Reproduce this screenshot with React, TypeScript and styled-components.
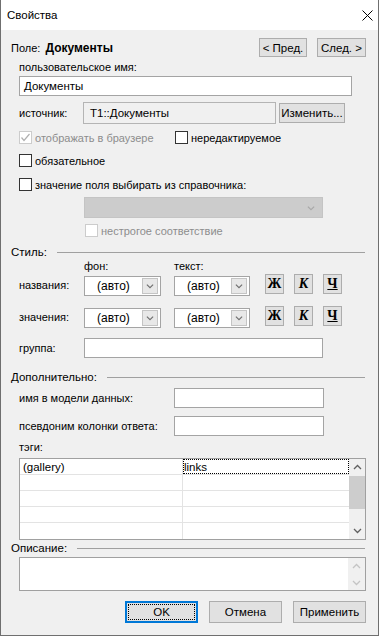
import { FC, ReactNode } from 'react';
import styled, { createGlobalStyle, css } from 'styled-components';

const GlobalStyle = createGlobalStyle`
  html, body {
    margin: 0;
    padding: 0;
    background: #f0f0f0;
  }
  body {
    font-family: "Liberation Sans", Arial, sans-serif;
    font-size: 11px;
    color: #000;
  }
  * {
    box-sizing: border-box;
  }
`;

const Chevron: FC<{ up?: boolean; color?: string; size?: number }> = ({ up, color = '#606060', size = 9 }) => (
  <svg width={size} height={size} viewBox="0 0 9 9">
    <polyline
      points={up ? '1,6 4.5,2.5 8,6' : '1,3 4.5,6.5 8,3'}
      fill="none"
      stroke={color}
      strokeWidth="1.3"
    />
  </svg>
);

const CheckMark: FC<{ color: string }> = ({ color }) => (
  <svg width="11" height="11" viewBox="0 0 11 11">
    <polyline points="1.5,5.5 4,8.5 9.5,2" fill="none" stroke={color} strokeWidth="1.2" />
  </svg>
);

const Checkbox: FC<{ checked?: boolean; disabled?: boolean; children: ReactNode }> = ({
  checked,
  disabled,
  children,
}) => (
  <CheckLabel disabled={disabled}>
    <CheckBoxSquare disabled={disabled}>
      {checked && <CheckMark color={disabled ? '#b0b0b0' : '#000'} />}
    </CheckBoxSquare>
    {children}
  </CheckLabel>
);

const Section: FC<{ title: string; mt: number }> = ({ title, mt }) => (
  <SectionHeader $mt={mt}>
    <span>{title}</span>
    <SectionLine />
  </SectionHeader>
);

const Combo: FC<{ width: number; mt?: number }> = ({ width, mt = 0 }) => (
  <ComboBox $w={width} $mt={mt}>
    <span>(авто)</span>
    <ComboArrow>
      <Chevron size={8} color="#707070" />
    </ComboArrow>
  </ComboBox>
);

const tagRows = [
  ['(gallery)', 'links'],
  ['', ''],
  ['', ''],
  ['', ''],
  ['', ''],
];

const App: FC = () => {
  return (
    <>
      <GlobalStyle />
      <Window>
        <TitleBar>
          <span>Свойства</span>
          <svg width="11" height="11" viewBox="0 0 11 11">
            <path d="M0.5 0.5 L10.5 10.5 M10.5 0.5 L0.5 10.5" stroke="#000" strokeWidth="1" />
          </svg>
        </TitleBar>

        <Body>
          <HeaderRow $mt={8}>
            <FieldTitle>
              Поле: <b>Документы</b>
            </FieldTitle>
            <NavGroup>
              <Button $w={48} $h={19}>&lt; Пред.</Button>
              <Button $w={49} $h={19}>След. &gt;</Button>
            </NavGroup>
          </HeaderRow>

          <Indent>
            <Label $mt={4}>пользовательское имя:</Label>
            <TextInput $w={333} $h={20} $mt={2}>Документы</TextInput>

            <Row $mt={6} $h={22}>
              <RowLabel $w={64}>источник:</RowLabel>
              <TextInput $w={193} $h={22} $readonly>T1::Документы</TextInput>
              <Button $w={66} $h={20} $ml={3}>Изменить...</Button>
            </Row>

            <Row $mt={7} $h={13}>
              <CheckCell $w={156}>
                <Checkbox checked disabled>
                  отображать в браузере
                </Checkbox>
              </CheckCell>
              <Checkbox>нередактируемое</Checkbox>
            </Row>

            <Row $mt={10} $h={13}>
              <Checkbox>обязательное</Checkbox>
            </Row>

            <Row $mt={11} $h={13}>
              <Checkbox>значение поля выбирать из справочника:</Checkbox>
            </Row>

            <Row $mt={6} $h={21} $pl={65}>
              <DisabledCombo>
                <Chevron size={8} color="#a8a8a8" />
              </DisabledCombo>
            </Row>

            <Row $mt={6} $h={13} $pl={66}>
              <Checkbox disabled>нестрогое соответствие</Checkbox>
            </Row>
          </Indent>

          <Section title="Стиль:" mt={8} />

          <Indent>
            <Row $mt={1} $h={12} $pl={65}>
              <RowLabel $w={90}>фон:</RowLabel>
              <RowLabel $w={76}>текст:</RowLabel>
            </Row>

            {['названия:', 'значения:'].map((name, i) => (
              <StyleRow key={name} $mt={i === 0 ? 2 : 10}>
                <RowLabel $w={65}>{name}</RowLabel>
                <Combo width={77} mt={2} />
                <Combo width={76} mt={2} />
                <FormatButtons>
                  <FormatButton>Ж</FormatButton>
                  <FormatButton $italic>К</FormatButton>
                  <FormatButton $underline>Ч</FormatButton>
                </FormatButtons>
              </StyleRow>
            ))}

            <Row $mt={10} $h={20}>
              <RowLabel $w={65}>группа:</RowLabel>
              <TextInput $w={239} $h={20} />
            </Row>
          </Indent>

          <Section title="Дополнительно:" mt={12} />

          <Indent>
            <Row $mt={4} $h={20}>
              <RowLabel $w={155}>имя в модели данных:</RowLabel>
              <TextInput $w={150} $h={20} />
            </Row>
            <Row $mt={8} $h={20}>
              <RowLabel $w={155}>псевдоним колонки ответа:</RowLabel>
              <TextInput $w={150} $h={20} />
            </Row>

            <Label $mt={5}>тэги:</Label>

            <TagTable>
              <TagGrid>
                {tagRows.map((row, i) => (
                  <TagRow key={i}>
                    <TagCell>{row[0]}</TagCell>
                    <TagCell $focused={i === 0}>{row[1]}</TagCell>
                  </TagRow>
                ))}
              </TagGrid>
              <ScrollBar>
                <ScrollButton>
                  <Chevron up color="#606060" />
                </ScrollButton>
                <ScrollTrack>
                  <ScrollThumb />
                </ScrollTrack>
                <ScrollButton>
                  <Chevron color="#606060" />
                </ScrollButton>
              </ScrollBar>
            </TagTable>
          </Indent>

          <Section title="Описание:" mt={1} />

          <Indent>
            <DescriptionBox>
              <DescriptionScroll>
                <Chevron up color="#c4c4c4" />
                <Chevron color="#c4c4c4" />
              </DescriptionScroll>
            </DescriptionBox>
          </Indent>

          <Footer>
            <Button $w={73} $h={22} $default>
              <FocusRing>OK</FocusRing>
            </Button>
            <Button $w={73} $h={22}>Отмена</Button>
            <Button $w={73} $h={22}>Применить</Button>
          </Footer>
        </Body>
      </Window>
    </>
  );
};

export default App;

const Window = styled.div`
  width: 379px;
  height: 636px;
  display: flex;
  flex-direction: column;
  background: #f0f0f0;
  border: 1px solid #6f6f6f;
  border-top: none;
`;

const TitleBar = styled.div`
  height: 30px;
  flex-shrink: 0;
  background: #fff;
  display: flex;
  align-items: center;
  justify-content: space-between;
  padding: 0 5px 0 6px;
  font-size: 11.5px;
`;

const Body = styled.div`
  display: flex;
  flex-direction: column;
  padding: 0 12px 0 10px;
`;

const Indent = styled.div`
  display: flex;
  flex-direction: column;
  padding-left: 8px;
`;

const HeaderRow = styled.div<{ $mt: number }>`
  margin-top: ${(p) => p.$mt}px;
  height: 19px;
  display: flex;
  align-items: center;
  justify-content: space-between;
`;

const FieldTitle = styled.div`
  font-size: 11px;

  b {
    font-size: 12px;
    margin-left: 2px;
  }
`;

const NavGroup = styled.div`
  display: flex;
  gap: 10px;
`;

const Label = styled.div<{ $mt: number }>`
  margin-top: ${(p) => p.$mt}px;
  height: 13px;
  line-height: 13px;
`;

const Row = styled.div<{ $mt: number; $h: number; $pl?: number }>`
  margin-top: ${(p) => p.$mt}px;
  height: ${(p) => p.$h}px;
  padding-left: ${(p) => p.$pl ?? 0}px;
  display: flex;
  align-items: center;
`;

const StyleRow = styled.div<{ $mt: number }>`
  margin-top: ${(p) => p.$mt}px;
  height: 22px;
  display: flex;
  align-items: flex-start;

  & > span {
    align-self: center;
  }
`;

const RowLabel = styled.span<{ $w: number }>`
  width: ${(p) => p.$w}px;
  flex-shrink: 0;
  white-space: nowrap;
`;

const TextInput = styled.div<{ $w: number; $h: number; $mt?: number; $readonly?: boolean }>`
  width: ${(p) => p.$w}px;
  height: ${(p) => p.$h}px;
  margin-top: ${(p) => p.$mt ?? 0}px;
  flex-shrink: 0;
  display: flex;
  align-items: center;
  padding-left: ${(p) => (p.$readonly ? 6 : 4)}px;
  font-size: 11.5px;
  background: ${(p) => (p.$readonly ? '#f0f0f0' : '#fff')};
  border: 1px solid ${(p) => (p.$readonly ? '#b4b4b4' : '#a4a4a4')};
`;

const Button = styled.div<{ $w: number; $h: number; $ml?: number; $default?: boolean }>`
  width: ${(p) => p.$w}px;
  height: ${(p) => p.$h}px;
  margin-left: ${(p) => p.$ml ?? 0}px;
  flex-shrink: 0;
  display: flex;
  align-items: center;
  justify-content: center;
  background: #e1e1e1;
  border: 1px solid #adadad;
  font-size: 11.5px;
  white-space: nowrap;

  ${(p) =>
    p.$default &&
    css`
      border: 2px solid #0078d7;
      padding: 1px;
    `}
`;

const FocusRing = styled.span`
  width: 100%;
  height: 100%;
  display: flex;
  align-items: center;
  justify-content: center;
  border: 1px dotted #000;
`;

const CheckCell = styled.div<{ $w: number }>`
  width: ${(p) => p.$w}px;
  flex-shrink: 0;
`;

const CheckLabel = styled.label<{ disabled?: boolean }>`
  display: flex;
  align-items: center;
  gap: 3px;
  white-space: nowrap;
  color: ${(p) => (p.disabled ? '#8d8d8d' : '#000')};
`;

const CheckBoxSquare = styled.span<{ disabled?: boolean }>`
  width: 13px;
  height: 13px;
  display: flex;
  align-items: center;
  justify-content: center;
  background: #fff;
  border: 1px solid ${(p) => (p.disabled ? '#cccccc' : '#333333')};
`;

const DisabledCombo = styled.div`
  width: 239px;
  height: 21px;
  display: flex;
  align-items: center;
  justify-content: flex-end;
  padding-right: 7px;
  background: #cccccc;
  border: 1px solid #c4c4c4;
`;

const SectionHeader = styled.div<{ $mt: number }>`
  margin-top: ${(p) => p.$mt}px;
  height: 14px;
  display: flex;
  align-items: center;
  gap: 10px;
  padding-right: 1px;
  font-size: 11.5px;
`;

const SectionLine = styled.div`
  flex: 1;
  height: 1px;
  background: #a0a0a0;
`;

const ComboBox = styled.div<{ $w: number; $mt: number }>`
  width: ${(p) => p.$w}px;
  height: 20px;
  margin-top: ${(p) => p.$mt}px;
  margin-right: 13px;
  flex-shrink: 0;
  display: flex;
  align-items: center;
  justify-content: space-between;
  padding: 0 2px 0 12px;
  background: #fff;
  border: 1px solid #a4a4a4;
  font-size: 12px;
`;

const ComboArrow = styled.span`
  width: 16px;
  height: 16px;
  display: flex;
  align-items: center;
  justify-content: center;
  background: #e8e8e8;
  border: 1px solid #c4c4c4;
`;

const FormatButtons = styled.div`
  display: flex;
  gap: 10px;
  margin-left: 2px;
`;

const FormatButton = styled.div<{ $italic?: boolean; $underline?: boolean }>`
  width: 19px;
  height: 20px;
  display: flex;
  align-items: center;
  justify-content: center;
  background: #e1e1e1;
  border: 1px solid #adadad;
  font-family: "Liberation Serif", "Times New Roman", serif;
  font-weight: bold;
  font-size: 14px;
  font-style: ${(p) => (p.$italic ? 'italic' : 'normal')};
  text-decoration: ${(p) => (p.$underline ? 'underline' : 'none')};
`;

const TagTable = styled.div`
  margin-top: 4px;
  width: 347px;
  height: 82px;
  display: flex;
  background: #fff;
  border: 1px solid #a0a0a0;
`;

const TagGrid = styled.div`
  flex: 1;
  display: flex;
  flex-direction: column;
`;

const TagRow = styled.div`
  height: 16px;
  flex-shrink: 0;
  display: grid;
  grid-template-columns: 163px 1fr;
  border-bottom: 1px solid #e3e3e3;

  &:last-child {
    border-bottom: none;
  }
`;

const TagCell = styled.div<{ $focused?: boolean }>`
  display: flex;
  align-items: center;
  padding-left: ${(p) => (p.$focused ? 1 : 3)}px;
  font-size: 11.5px;
  border-right: 1px solid #e3e3e3;

  &:last-child {
    border-right: none;
  }

  ${(p) =>
    p.$focused &&
    css`
      outline: 1px dotted #000;
      outline-offset: -1px;
    `}
`;

const ScrollBar = styled.div`
  width: 16px;
  display: flex;
  flex-direction: column;
  background: #f0f0f0;
`;

const ScrollButton = styled.div`
  height: 17px;
  display: flex;
  align-items: center;
  justify-content: center;
`;

const ScrollTrack = styled.div`
  flex: 1;
  display: flex;
  flex-direction: column;
`;

const ScrollThumb = styled.div`
  height: 33px;
  background: #cdcdcd;
`;

const DescriptionBox = styled.div`
  margin-top: 2px;
  width: 347px;
  height: 34px;
  display: flex;
  justify-content: flex-end;
  background: #fff;
  border: 1px solid #a0a0a0;
`;

const DescriptionScroll = styled.div`
  width: 17px;
  display: flex;
  flex-direction: column;
  align-items: center;
  justify-content: space-around;
  background: #f0f0f0;
`;

const Footer = styled.div`
  margin-top: 10px;
  display: flex;
  justify-content: flex-end;
  gap: 11px;
`;
